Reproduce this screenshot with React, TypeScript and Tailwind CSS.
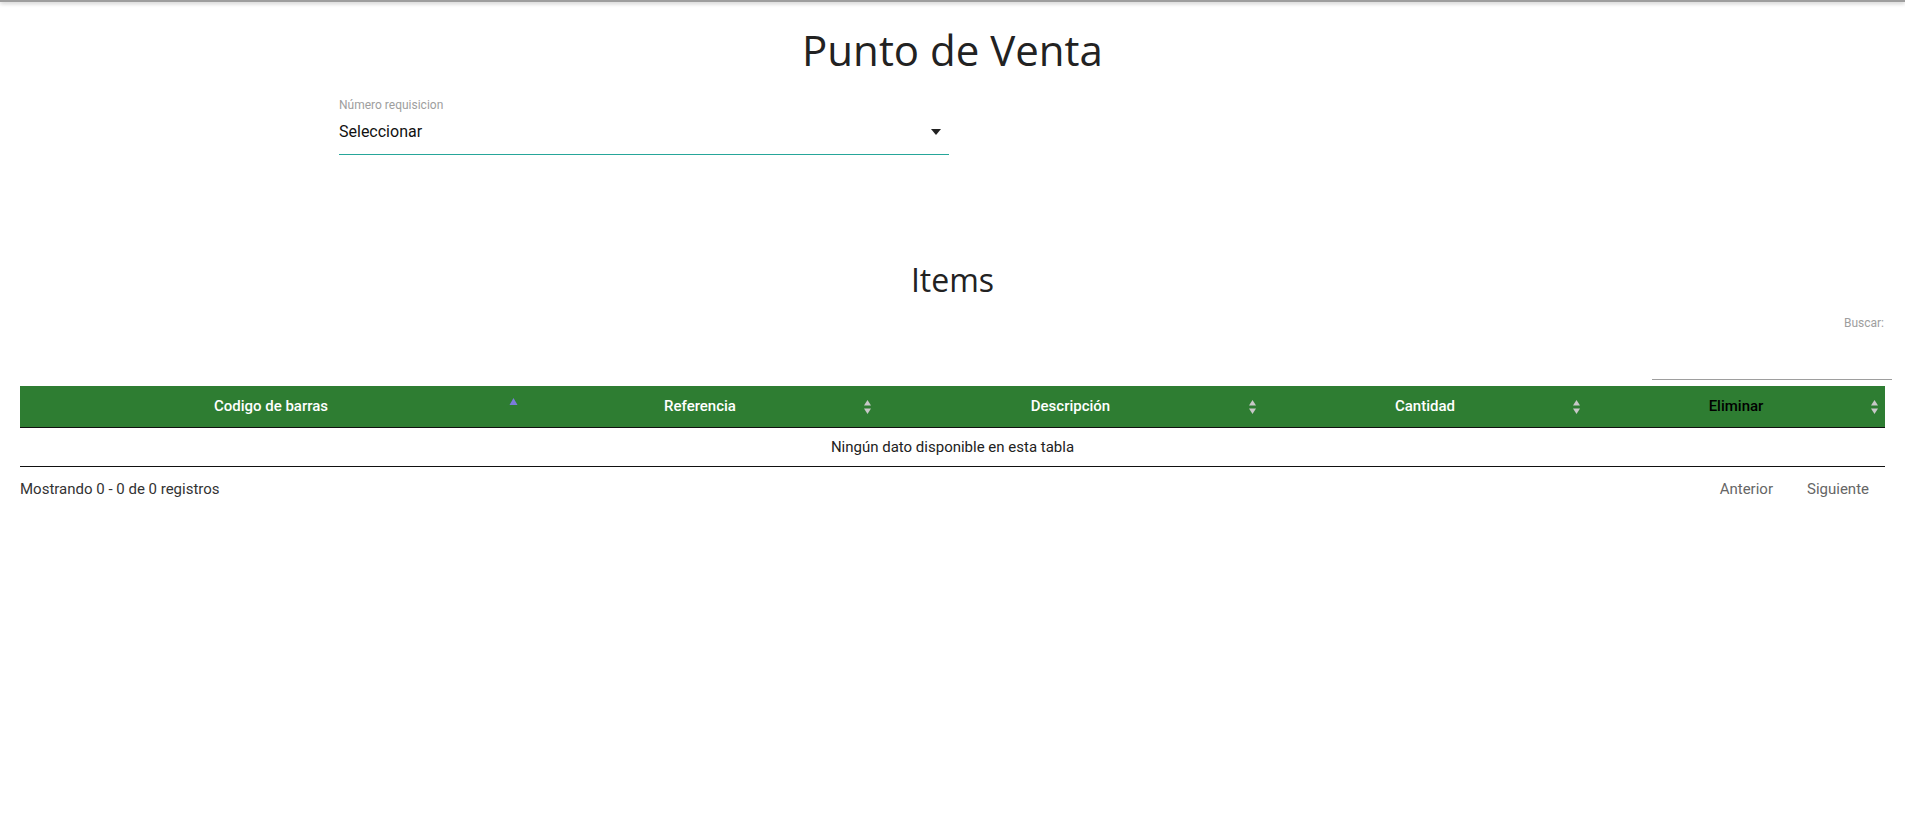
import React from 'react';

const columns = [
    { name: 'Codigo de barras', width: 'w-[502px]', active: true },
    { name: 'Referencia', width: 'w-[356px]' },
    { name: 'Descripción', width: 'w-[385px]' },
    { name: 'Cantidad', width: 'w-[324px]' },
    { name: 'Eliminar', width: 'flex-1', dark: true },
];

const SortIcon: React.FC<{ active?: boolean }> = ({ active }) =>
    active ? (
        <svg width="9" height="14" viewBox="0 0 9 14" className="absolute right-[4px] top-[11px]">
            <path d="M4.5 1 L8.5 8 L0.5 8 Z" fill="#7b7bdc" />
        </svg>
    ) : (
        <svg width="9" height="16" viewBox="0 0 9 16" className="absolute right-[6px] top-[13px]">
            <path d="M4.5 1 L8 6.5 L1 6.5 Z" fill="#c8c8c8" />
            <path d="M4.5 15 L8 9.5 L1 9.5 Z" fill="#c8c8c8" />
        </svg>
    );

const App: React.FC = () => {
    return (
        <div className="min-h-[840px] bg-white font-['Roboto',sans-serif] text-[#333]">
            <div className="h-[2px] bg-[#9e9e9e] shadow-[0_1px_4px_rgba(0,0,0,0.35)]" />

            <h1 className="pt-[18px] text-center font-['Open_Sans',sans-serif] text-[42px] leading-[60px] text-[#222]">
                Punto de Venta
            </h1>

            {/* select requisicion */}
            <div className="ml-[339px] mt-[17px] w-[610px]">
                <div className="text-[12px] leading-[16px] text-[#9e9e9e]">Número requisicion</div>
                <div className="flex items-center justify-between h-[42px] pb-[4px] border-b border-[#26a69a]">
                    <span className="text-[16px] text-[#111]">Seleccionar</span>
                    <svg width="12" height="8" viewBox="0 0 12 8" className="mr-[7px]">
                        <path d="M1 1 L11 1 L6 7 Z" fill="#222" />
                    </svg>
                </div>
            </div>

            <h2 className="mt-[100px] text-center font-['Open_Sans',sans-serif] text-[32px] leading-[50px] text-[#222]">
                Items
            </h2>

            {/* buscar */}
            <div className="flex flex-col items-end pr-[21px] mt-[10px]">
                <label className="text-[12px] leading-[16px] text-[#9e9e9e]">Buscar:</label>
            </div>
            <div className="flex justify-end pr-[13px] mt-[29px]">
                <div className="w-[240px] h-[20px] border-b border-[#9e9e9e]" />
            </div>

            {/* table */}
            <div className="mx-[20px] mt-[6px]">
                <div className="flex h-[42px] bg-[#2e7d32] border-b border-[#111]">
                    {columns.map((col) => (
                        <div
                            key={col.name}
                            className={`relative flex items-center justify-center ${col.width}`}
                        >
                            <span
                                className={`text-[15px] font-medium ${col.dark ? 'text-black' : 'text-white'}`}
                            >
                                {col.name}
                            </span>
                            <SortIcon active={col.active} />
                        </div>
                    ))}
                </div>
                <div className="flex items-center justify-center h-[39px] border-b border-[#111] text-[15px] text-[#222]">
                    Ningún dato disponible en esta tabla
                </div>
                <div className="flex items-center justify-between h-[45px] text-[15px]">
                    <span className="text-[#333]">Mostrando 0 - 0 de 0 registros</span>
                    <div className="flex gap-[34px] pr-[16px] text-[#666]">
                        <span>Anterior</span>
                        <span>Siguiente</span>
                    </div>
                </div>
            </div>
        </div>
    );
};

export default App;
